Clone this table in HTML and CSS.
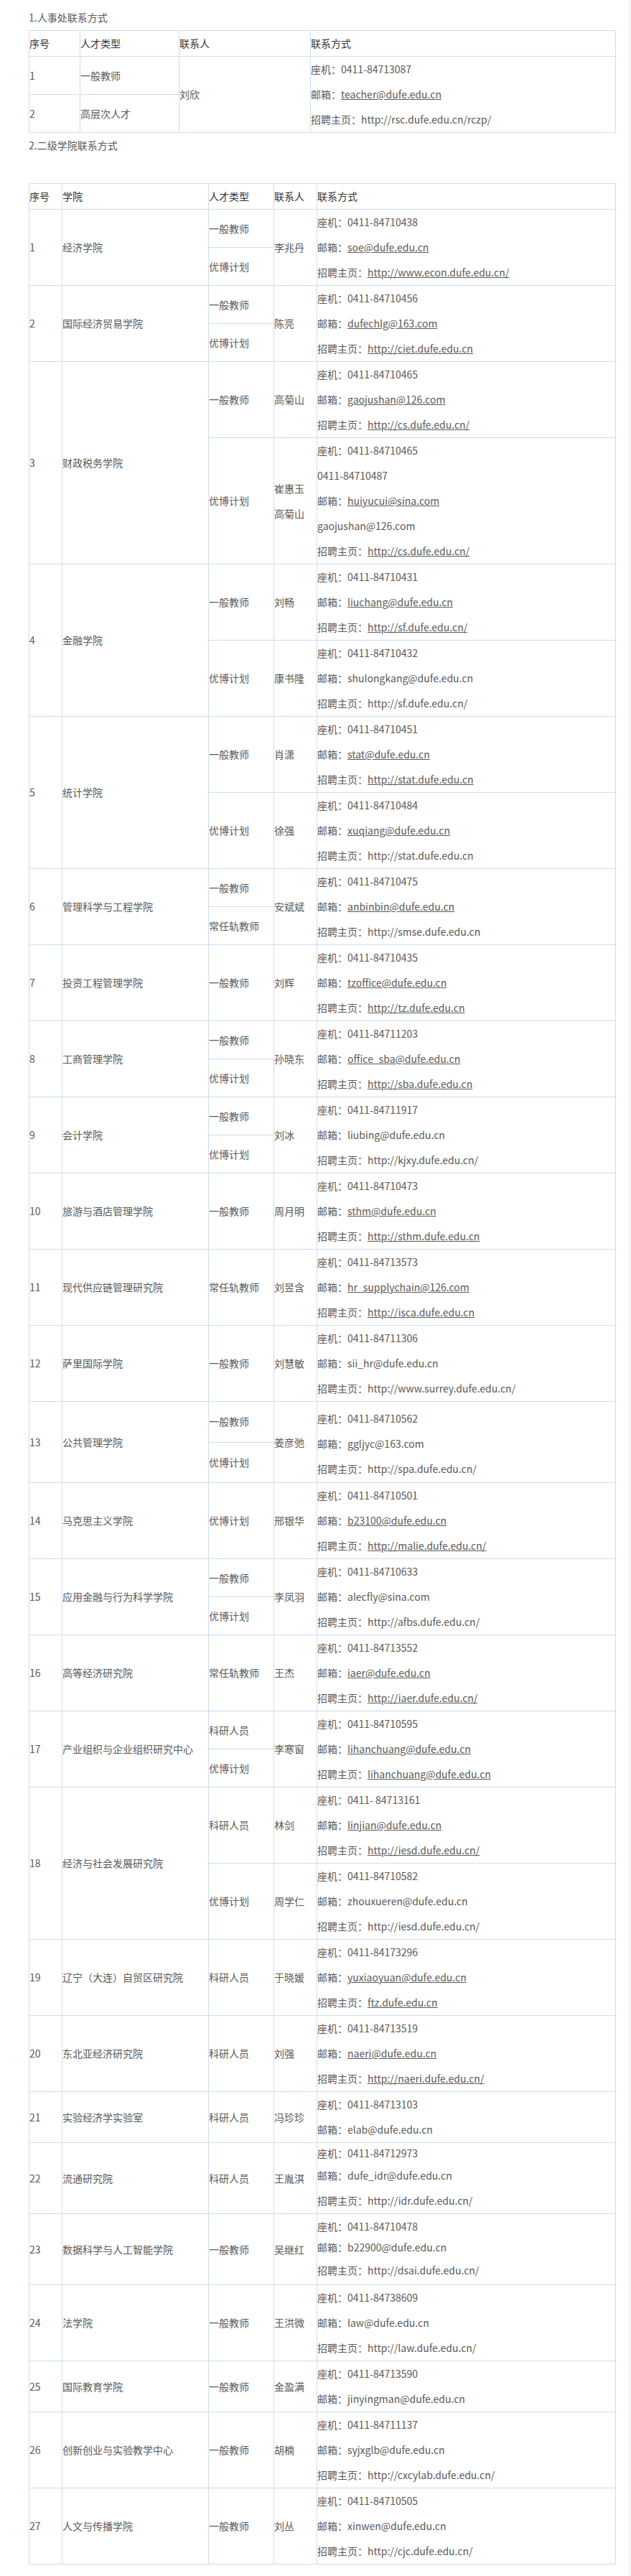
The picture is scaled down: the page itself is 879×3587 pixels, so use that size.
FILE: index.html
```html
<!DOCTYPE html>
<html lang="zh-CN">
<head>
<meta charset="utf-8">
<title>联系方式</title>
<link rel="stylesheet" href="styles.css">
</head>
<body>
<div class="page">
<p>1.人事处联系方式</p>
<table class="t1">
<colgroup><col class="c1a"><col class="c1b"><col class="c1c"><col class="c1d"></colgroup>
<tr class="hd"><td>序号</td><td>人才类型</td><td>联系人</td><td>联系方式</td></tr>
<tr><td>1</td><td>一般教师</td><td rowspan="2">刘欣</td><td rowspan="2"><p>座机：0411-84713087</p><p>邮箱：<a class="u">teacher@dufe.edu.cn</a></p><p>招聘主页：http://rsc.dufe.edu.cn/rczp/</p></td></tr>
<tr><td>2</td><td>高层次人才</td></tr>
</table>
<p>2.二级学院联系方式</p>
<p class="blank"></p>
<table class="t2">
<colgroup><col class="c2a"><col class="c2b"><col class="c2c"><col class="c2d"><col class="c2e"></colgroup>
<tr class="hd"><td>序号</td><td>学院</td><td>人才类型</td><td>联系人</td><td>联系方式</td></tr>

<tr><td rowspan="2">1</td><td rowspan="2">经济学院</td><td>一般教师</td><td rowspan="2">李兆丹</td><td rowspan="2"><p>座机：0411-84710438</p><p>邮箱：<a class="u">soe@dufe.edu.cn</a></p><p>招聘主页：<a class="u">http://www.econ.dufe.edu.cn/</a></p></td></tr>
<tr><td>优博计划</td></tr>

<tr><td rowspan="2">2</td><td rowspan="2">国际经济贸易学院</td><td>一般教师</td><td rowspan="2">陈亮</td><td rowspan="2"><p>座机：0411-84710456</p><p>邮箱：<a class="u">dufechlg@163.com</a></p><p>招聘主页：<a class="u">http://ciet.dufe.edu.cn</a></p></td></tr>
<tr><td>优博计划</td></tr>

<tr><td rowspan="2">3</td><td rowspan="2">财政税务学院</td><td>一般教师</td><td>高菊山</td><td><p>座机：0411-84710465</p><p>邮箱：<a class="u">gaojushan@126.com</a></p><p>招聘主页：<a class="u">http://cs.dufe.edu.cn/</a></p></td></tr>
<tr><td>优博计划</td><td><p>崔惠玉</p><p>高菊山</p></td><td><p>座机：0411-84710465</p><p>0411-84710487</p><p>邮箱：<a class="u">huiyucui@sina.com</a></p><p>gaojushan@126.com</p><p>招聘主页：<a class="u">http://cs.dufe.edu.cn/</a></p></td></tr>

<tr><td rowspan="2">4</td><td rowspan="2">金融学院</td><td>一般教师</td><td>刘畅</td><td><p>座机：0411-84710431</p><p>邮箱：<a class="u">liuchang@dufe.edu.cn</a></p><p>招聘主页：<a class="u">http://sf.dufe.edu.cn/</a></p></td></tr>
<tr><td>优博计划</td><td>康书隆</td><td><p>座机：0411-84710432</p><p>邮箱：shulongkang@dufe.edu.cn</p><p>招聘主页：http://sf.dufe.edu.cn/</p></td></tr>

<tr><td rowspan="2">5</td><td rowspan="2">统计学院</td><td>一般教师</td><td>肖潇</td><td><p>座机：0411-84710451</p><p>邮箱：<a class="u">stat@dufe.edu.cn</a></p><p>招聘主页：<a class="u">http://stat.dufe.edu.cn</a></p></td></tr>
<tr><td>优博计划</td><td>徐强</td><td><p>座机：0411-84710484</p><p>邮箱：<a class="u">xuqiang@dufe.edu.cn</a></p><p>招聘主页：http://stat.dufe.edu.cn</p></td></tr>

<tr><td rowspan="2">6</td><td rowspan="2">管理科学与工程学院</td><td>一般教师</td><td rowspan="2">安斌斌</td><td rowspan="2"><p>座机：0411-84710475</p><p>邮箱：<a class="u">anbinbin@dufe.edu.cn</a></p><p>招聘主页：http://smse.dufe.edu.cn</p></td></tr>
<tr><td>常任轨教师</td></tr>

<tr><td>7</td><td>投资工程管理学院</td><td>一般教师</td><td>刘辉</td><td><p>座机：0411-84710435</p><p>邮箱：<a class="u">tzoffice@dufe.edu.cn</a></p><p>招聘主页：<a class="u">http://tz.dufe.edu.cn</a></p></td></tr>

<tr><td rowspan="2">8</td><td rowspan="2">工商管理学院</td><td>一般教师</td><td rowspan="2">孙晓东</td><td rowspan="2"><p>座机：0411-84711203</p><p>邮箱：<a class="u">office_sba@dufe.edu.cn</a></p><p>招聘主页：<a class="u">http://sba.dufe.edu.cn</a></p></td></tr>
<tr><td>优博计划</td></tr>

<tr><td rowspan="2">9</td><td rowspan="2">会计学院</td><td>一般教师</td><td rowspan="2">刘冰</td><td rowspan="2"><p>座机：0411-84711917</p><p>邮箱：liubing@dufe.edu.cn</p><p>招聘主页：http://kjxy.dufe.edu.cn/</p></td></tr>
<tr><td>优博计划</td></tr>

<tr><td>10</td><td>旅游与酒店管理学院</td><td>一般教师</td><td>周月明</td><td><p>座机：0411-84710473</p><p>邮箱：<a class="u">sthm@dufe.edu.cn</a></p><p>招聘主页：<a class="u">http://sthm.dufe.edu.cn</a></p></td></tr>

<tr><td>11</td><td>现代供应链管理研究院</td><td>常任轨教师</td><td>刘昱含</td><td><p>座机：0411-84713573</p><p>邮箱：<a class="u">hr_supplychain@126.com</a></p><p>招聘主页：<a class="u">http://isca.dufe.edu.cn</a></p></td></tr>

<tr><td>12</td><td>萨里国际学院</td><td>一般教师</td><td>刘慧敏</td><td><p>座机：0411-84711306</p><p>邮箱：sii_hr@dufe.edu.cn</p><p>招聘主页：http://www.surrey.dufe.edu.cn/</p></td></tr>

<tr><td rowspan="2">13</td><td rowspan="2">公共管理学院</td><td>一般教师</td><td rowspan="2">姜彦弛</td><td rowspan="2" class="pad13"><p>座机：0411-84710562</p><p>邮箱：ggljyc@163.com</p><p>招聘主页：http://spa.dufe.edu.cn/</p></td></tr>
<tr><td>优博计划</td></tr>

<tr><td>14</td><td>马克思主义学院</td><td>优博计划</td><td>邢银华</td><td><p>座机：0411-84710501</p><p>邮箱：<a class="u">b23100@dufe.edu.cn</a></p><p>招聘主页：<a class="u">http://malie.dufe.edu.cn/</a></p></td></tr>

<tr><td rowspan="2">15</td><td rowspan="2">应用金融与行为科学学院</td><td>一般教师</td><td rowspan="2">李凤羽</td><td rowspan="2"><p>座机：0411-84710633</p><p>邮箱：alecfly@sina.com</p><p>招聘主页：http://afbs.dufe.edu.cn/</p></td></tr>
<tr><td>优博计划</td></tr>

<tr><td>16</td><td>高等经济研究院</td><td>常任轨教师</td><td>王杰</td><td><p>座机：0411-84713552</p><p>邮箱：<a class="u">iaer@dufe.edu.cn</a></p><p>招聘主页：<a class="u">http://iaer.dufe.edu.cn/</a></p></td></tr>

<tr><td rowspan="2">17</td><td rowspan="2">产业组织与企业组织研究中心</td><td>科研人员</td><td rowspan="2">李寒窗</td><td rowspan="2"><p>座机：0411-84710595</p><p>邮箱：<a class="u">lihanchuang@dufe.edu.cn</a></p><p>招聘主页：<a class="u">lihanchuang@dufe.edu.cn</a></p></td></tr>
<tr><td>优博计划</td></tr>

<tr><td rowspan="2">18</td><td rowspan="2">经济与社会发展研究院</td><td>科研人员</td><td>林剑</td><td><p>座机：0411- 84713161</p><p>邮箱：<a class="u">linjian@dufe.edu.cn</a></p><p>招聘主页：<a class="u">http://iesd.dufe.edu.cn/</a></p></td></tr>
<tr><td>优博计划</td><td>周学仁</td><td><p>座机：0411-84710582</p><p>邮箱：zhouxueren@dufe.edu.cn</p><p>招聘主页：http://iesd.dufe.edu.cn/</p></td></tr>

<tr><td>19</td><td>辽宁（大连）自贸区研究院</td><td>科研人员</td><td>于晓媛</td><td><p>座机：0411-84173296</p><p>邮箱：<a class="u">yuxiaoyuan@dufe.edu.cn</a></p><p>招聘主页：<a class="u">ftz.dufe.edu.cn</a></p></td></tr>

<tr><td>20</td><td>东北亚经济研究院</td><td>科研人员</td><td>刘强</td><td><p>座机：0411-84713519</p><p>邮箱：<a class="u">naeri@dufe.edu.cn</a></p><p>招聘主页：<a class="u">http://naeri.dufe.edu.cn/</a></p></td></tr>

<tr><td>21</td><td>实验经济学实验室</td><td>科研人员</td><td>冯珍珍</td><td><p>座机：0411-84713103</p><p>邮箱：elab@dufe.edu.cn</p></td></tr>

<tr><td>22</td><td>流通研究院</td><td>科研人员</td><td>王胤淇</td><td><p class="h28">座机：0411-84712973</p><p>邮箱：dufe_idr@dufe.edu.cn</p><p>招聘主页：http://idr.dufe.edu.cn/</p></td></tr>

<tr><td>23</td><td>数据科学与人工智能学院</td><td>一般教师</td><td>吴继红</td><td><p class="h34">座机：0411-84710478</p><p class="h24">邮箱：b22900@dufe.edu.cn</p><p class="h40">招聘主页：http://dsai.dufe.edu.cn/</p></td></tr>

<tr><td>24</td><td>法学院</td><td>一般教师</td><td>王洪微</td><td><p>座机：0411-84738609</p><p>邮箱：law@dufe.edu.cn</p><p>招聘主页：http://law.dufe.edu.cn/</p></td></tr>

<tr><td>25</td><td>国际教育学院</td><td>一般教师</td><td>金盈满</td><td><p>座机：0411-84713590</p><p>邮箱：jinyingman@dufe.edu.cn</p></td></tr>

<tr><td>26</td><td>创新创业与实验教学中心</td><td>一般教师</td><td>胡楠</td><td><p>座机：0411-84711137</p><p>邮箱：syjxglb@dufe.edu.cn</p><p>招聘主页：http://cxcylab.dufe.edu.cn/</p></td></tr>

<tr><td>27</td><td>人文与传播学院</td><td>一般教师</td><td>刘丛</td><td><p>座机：0411-84710505</p><p>邮箱：xinwen@dufe.edu.cn</p><p>招聘主页：http://cjc.dufe.edu.cn/</p></td></tr>
</table>
</div>
</body>
</html>
```

FILE: styles.css
```css
html, body {
  margin: 0;
  padding: 0;
  background: #fff;
}
body {
  font-family: "Noto Sans CJK SC", "Microsoft YaHei", "Noto Sans", sans-serif;
  font-size: 14px;
  color: #595959;
}
.page {
  box-sizing: border-box;
  width: 878px;
  min-height: 3587px;
  padding: 7px 0 0 40px;
  border-right: 1px solid #e2e2e2;
}
p {
  margin: 0;
  line-height: 35px;
}
.blank {
  height: 35px;
}
table {
  border-collapse: collapse;
  table-layout: fixed;
  width: 817px;
}
td {
  border: 1px solid #cfdcef;
  padding: 0;
  vertical-align: middle;
  line-height: 35px;
  white-space: nowrap;
  overflow: hidden;
}
.hd td {
  color: #333;
}
.c1a { width: 71px; }
.c1b { width: 138px; }
.c1c { width: 183px; }
.c1d { width: 425px; }
.c2a { width: 46px; }
.c2b { width: 204px; }
.c2c { width: 91px; }
.c2d { width: 60px; }
.c2e { width: 416px; }
a.u {
  color: #595959;
  text-decoration: underline;
}
.pad13 {
  padding-top: 6px;
  padding-bottom: 1px;
}
.h28 { line-height: 28px; }
.h34 { line-height: 34px; }
.h24 { line-height: 24px; }
.h40 { line-height: 40px; }
```
